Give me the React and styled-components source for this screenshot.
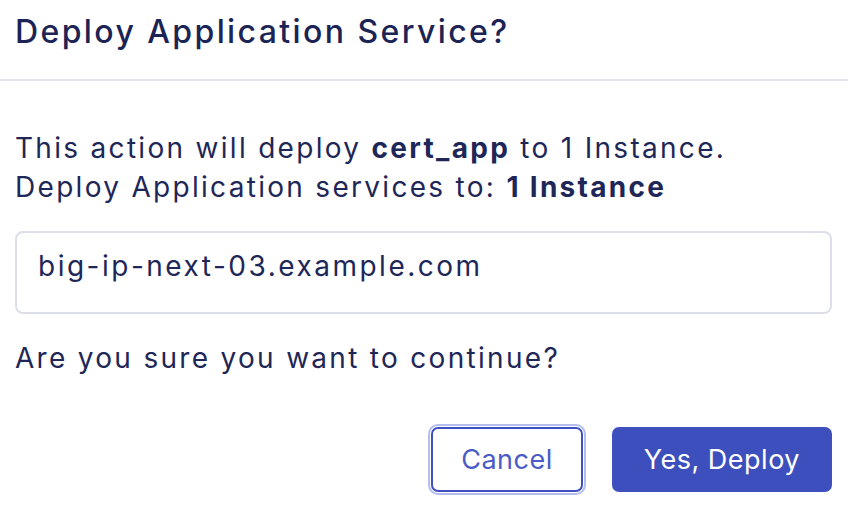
import React from 'react';
import styled, { createGlobalStyle } from 'styled-components';

const Global = createGlobalStyle`
  html, body {
    margin: 0;
    background: #ffffff;
    font-family: Inter, "Noto Sans", sans-serif;
    color: #1e2757;
  }
`;

const Dialog = styled.div`
  width: 848px;
  height: 508px;
  display: flex;
  flex-direction: column;
  background: #fff;
`;

const Header = styled.div`
  height: 81px;
  display: flex;
  align-items: flex-start;
  padding: 12px 15px 0;
  box-sizing: border-box;
  border-bottom: 2px solid #e2e4ec;
`;

const Title = styled.h2`
  margin: 0;
  font-size: 32px;
  font-weight: 500;
  letter-spacing: 2.4px;
  color: #1b2455;
`;

const Body = styled.div`
  padding: 48px 16px 0 15px;
  display: flex;
  flex-direction: column;
`;

const Text = styled.p`
  margin: 0;
  font-size: 28px;
  line-height: 39px;
  letter-spacing: 2.3px;
  color: #1e2757;
  b {
    font-weight: 700;
  }
`;

const HostBox = styled.div`
  margin-top: 24px;
  height: 83px;
  box-sizing: border-box;
  border: 2px solid #dcdfea;
  border-radius: 8px;
  padding: 0 21px 14px;
  display: flex;
  align-items: center;
  font-size: 28px;
  letter-spacing: 2.5px;
  color: #1e2757;
`;

const Question = styled(Text)`
  margin-top: 25px;
`;

const Actions = styled.div`
  margin-top: 49px;
  display: flex;
  justify-content: flex-end;
  gap: 29px;
`;

const Button = styled.button`
  height: 65px;
  box-sizing: border-box;
  border-radius: 7px;
  font-family: Inter, "Noto Sans", sans-serif;
  font-size: 27px;
  letter-spacing: 0.5px;
  padding: 0 ${(p) => (p.$primary ? '30px' : '28px')};
  border: 2px solid #3f51c0;
  background: ${(p) => (p.$primary ? '#3d4fbd' : '#ffffff')};
  color: ${(p) => (p.$primary ? '#ffffff' : '#4a5bc6')};
  outline: ${(p) => (p.$focused ? '2px solid #b4bdee' : 'none')};
  outline-offset: 1px;
  cursor: pointer;
`;

export default function App() {
  return (
    <>
      <Global />
      <Dialog>
        <Header>
          <Title>Deploy Application Service?</Title>
        </Header>
        <Body>
          <Text>
            This action will deploy <b>cert_app</b> to 1 Instance.
            <br />
            Deploy Application services to: <b>1 Instance</b>
          </Text>
          <HostBox>big-ip-next-03.example.com</HostBox>
          <Question>Are you sure you want to continue?</Question>
          <Actions>
            <Button $focused>Cancel</Button>
            <Button $primary>Yes, Deploy</Button>
          </Actions>
        </Body>
      </Dialog>
    </>
  );
}
